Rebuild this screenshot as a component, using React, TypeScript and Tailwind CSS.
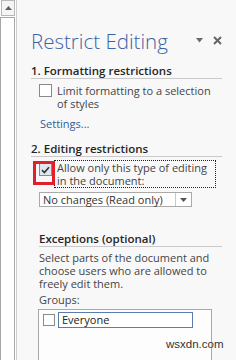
import React from "react";

const Box = ({ checked = false }: { checked?: boolean }) => (
  <div
    className={`w-[13px] h-[13px] shrink-0 border border-[#8a8a8a] flex items-center justify-center ${
      checked ? "bg-[#dfe6ef]" : "bg-white"
    }`}
  >
    {checked && (
      <svg width="9" height="8" viewBox="0 0 9 8">
        <path d="M1 4.2 L3.4 6.5 L8 1.2" fill="none" stroke="#333" strokeWidth="1.6" />
      </svg>
    )}
  </div>
);

export default function App() {
  return (
    <div
      className="w-[236px] h-[360px] overflow-hidden flex bg-[#f8f8f8] text-[#444] relative"
      style={{ fontFamily: '"Open Sans", "Noto Sans", sans-serif' }}
    >
      {/* scrollbar */}
      <div className="w-[17px] shrink-0 flex flex-col border-r border-[#cfcfcf] bg-white">
        <div className="ml-[1px] w-[14px] h-[16px] border border-[#b8b8b8] bg-[#f4f4f4] flex items-center justify-center">
          <svg width="7" height="4" viewBox="0 0 7 4">
            <path d="M0 4 L3.5 0 L7 4 Z" fill="#606060" />
          </svg>
        </div>
        <div className="w-[15px] mt-[1px] flex-1 border-x border-t border-[#a8a8a8]" />
      </div>

      {/* panel */}
      <div className="flex-1 pl-[14px] pr-[14px] flex flex-col">
        <div className="mt-[28px] h-[26px] flex items-center">
          <div className="flex-1 text-[20.5px] leading-[26px] font-light text-[#3a64a6] whitespace-nowrap">
            Restrict Editing
          </div>
          <svg width="7" height="5" viewBox="0 0 7 5" className="mr-[10px] -mt-[2px]">
            <path d="M0 0 L7 0 L3.5 4.5 Z" fill="#6a6a6a" />
          </svg>
          <svg width="9" height="9" viewBox="0 0 9 9" className="-mt-[2px]">
            <path d="M1 1 L8 8 M8 1 L1 8" stroke="#666" strokeWidth="2" />
          </svg>
        </div>

        <div className="mt-[9px] h-[16px] text-[11.5px] leading-[15px] font-semibold text-[#262626] border-b border-[#cacaca] whitespace-nowrap">
          1. Formatting restrictions
        </div>

        <div className="mt-[5px] pl-[8px] flex gap-[5px] text-[11px] leading-[13px]">
          <Box />
          <div>
            Limit formatting to a selection
            <br />
            of styles
          </div>
        </div>

        <div className="mt-[7px] pl-[9px] text-[11px] leading-[13px] text-[#2f5c9e]">Settings...</div>

        <div className="mt-[11px] h-[16px] text-[11.5px] leading-[15px] font-semibold text-[#262626] border-b border-[#cacaca] whitespace-nowrap">
          2. Editing restrictions
        </div>

        <div className="mt-[3px] pl-[8px] flex gap-[2px] text-[11px] leading-[13px] relative">
          <div className="mt-[3px]">
            <Box checked />
          </div>
          <div className="flex-1 mr-[6px] border border-dotted border-[#222] pl-[2px]">
            Allow only this type of editing
            <br />
            in the document:
          </div>
          <div className="absolute left-[2px] top-[1px] w-[22px] h-[24px] border-[3px] border-[#e0202a]" />
        </div>

        <div className="mt-[4px] ml-[8px] w-[153px] h-[21px] border border-[#a9a9a9] bg-white flex text-[11px] leading-[13px]">
          <div className="flex-1 pl-[3px] flex items-center text-[#333] whitespace-nowrap">No changes (Read only)</div>
          <div className="w-[16px] border-l border-[#c8c8c8] flex items-center justify-center">
            <svg width="7" height="4" viewBox="0 0 7 4">
              <path d="M0 0 L7 0 L3.5 4 Z" fill="#555" />
            </svg>
          </div>
        </div>

        <div className="mt-[24px] ml-[8px] h-[16px] text-[11.5px] leading-[15px] font-semibold text-[#262626] border-b border-[#cacaca] whitespace-nowrap">
          Exceptions (optional)
        </div>

        <div className="mt-[4px] ml-[8px] text-[11px] leading-[13px]">
          Select parts of the document and
          <br />
          choose users who are allowed to
          <br />
          freely edit them.
        </div>

        <div className="mt-[3px] ml-[8px] text-[11px] leading-[13px]">Groups:</div>

        <div className="mt-[3px] ml-[7px] w-[174px] h-[60px] shrink-0 border border-[#a8a8a8] bg-[#fdfdfd] pl-[4px] pt-[2px]">
          <div className="flex items-center gap-[3px]">
            <div className="w-[12px] h-[12px] border border-[#8a8a8a] bg-white" />
            <div className="w-[135px] h-[16px] border border-[#5b7dad] bg-white pl-[3px] text-[11px] leading-[14px] text-[#222]">
              Everyone
            </div>
          </div>
        </div>
      </div>

      <div
        className="absolute left-[166px] top-[337px] text-[11.5px] leading-[14px] text-[#333] [text-shadow:0_0_2px_white]"
        style={{ fontFamily: '"Liberation Sans", Arial, sans-serif' }}
      >
        wsxdn.com
      </div>
    </div>
  );
}
